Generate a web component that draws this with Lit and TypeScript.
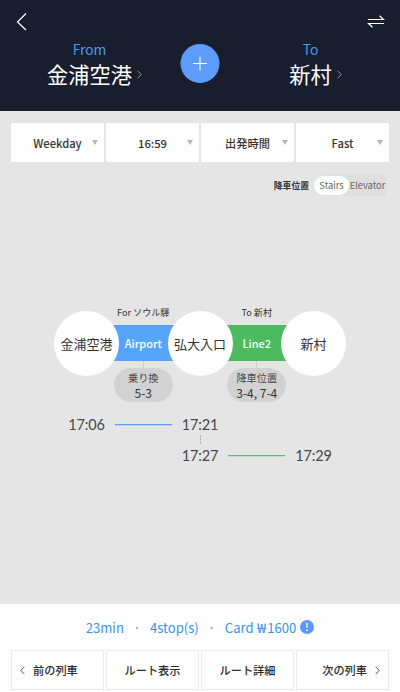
import { LitElement, html, css, svg } from "lit";
import { customElement, property } from "lit/decorators.js";

@customElement("chevron-icon")
class ChevronIcon extends LitElement {
  @property() dir = "right";
  static styles = css`
    :host { display: block; line-height: 0; }
    svg { display: block; width: 5px; height: 9px; fill: none; stroke: currentColor; stroke-width: 1; }
  `;
  render() {
    return html`<svg viewBox="0 0 5 9">${this.dir === "left"
      ? svg`<path d="M4.3.8.8 4.5l3.5 3.7"/>`
      : svg`<path d="M.7.8l3.5 3.7L.7 8.2"/>`}</svg>`;
  }
}

@customElement("route-header")
class RouteHeader extends LitElement {
  static styles = css`
    :host { display: block; height: 111px; background: #191e2e; color: #fff; box-sizing: border-box; }
    svg { display: block; fill: none; stroke: #fff; }
    .nav { height: 40px; padding: 12px 15px 0 16px; box-sizing: border-box; display: flex; justify-content: space-between; }
    .back { width: 12px; height: 20px; }
    .swap { width: 18px; height: 14px; margin-top: 3px; }
    .places { display: grid; grid-template-columns: 180px 40px 180px; height: 60px; }
    .place { display: flex; flex-direction: column; align-items: center; }
    .from { padding-right: 1px; }
    .to { padding-left: 1px; }
    .label { color: #4c9be8; font-size: 13.8px; line-height: 18px; }
    .name { display: flex; align-items: center; gap: 5px; font-size: 21.2px; line-height: 32px; margin-left: 10px; }
    .name chevron-icon { color: #9296a0; }
    .add svg { display: block; width: 40px; height: 40px; margin-top: 3px; }
    .disc { fill: #5e9cfb; stroke: none; }
  `;
  render() {
    return html`
      <div class="nav">
        <svg class="back" viewBox="0 0 12 20"><path d="M10 1.5 1.5 10l8.5 8" stroke-width="1.2"/></svg>
        <svg class="swap" viewBox="0 0 18 14" stroke-width="1.2"><path d="M1 4.5h15.5L12.5.8M17 8.5H1.5l4 3.7"/></svg>
      </div>
      <div class="places">
        <div class="place from"><div class="label">From</div><div class="name">金浦空港<chevron-icon></chevron-icon></div></div>
        <div class="add"><svg viewBox="0 0 40 40"><circle class="disc" cx="20" cy="20.5" r="19.5"/><path d="M13 20.5h14M20 13.5v14" stroke-width="1.1"/></svg></div>
        <div class="place to"><div class="label">To</div><div class="name">新村<chevron-icon></chevron-icon></div></div>
      </div>`;
  }
}

@customElement("route-filters")
class RouteFilters extends LitElement {
  static styles = css`
    :host { display: block; padding: 12px 11px 0; }
    .selects { display: grid; grid-template-columns: repeat(4, 1fr); gap: 2px; }
    .select { height: 39px; background: #fefefe; display: grid; grid-template-columns: 13px 1fr 13px; align-items: center; text-align: center; font-weight: 500; font-size: 11.2px; color: #333; }
    .value { grid-column: 2; white-space: nowrap; }
    .arrow { border: 3.5px solid transparent; border-top: 5px solid #b5b5b5; border-bottom: 0; width: 0; margin-left: 1px; }
    .position { display: flex; justify-content: flex-end; align-items: center; gap: 5px; padding: 13px 3px 0 0; font-size: 8.8px; }
    .caption { font-weight: 700; color: #333; }
    .toggle { display: flex; width: 72px; height: 21px; border-radius: 11px 2px 2px 11px; background: #dfdfdf; color: #666; line-height: 20px; font-size: 9.3px; text-align: center; }
    .on { width: 35px; height: 19px; margin-top: 1px; line-height: 18px; border-radius: 10px; background: #fff; }
    .off { flex: 1; white-space: nowrap; }
  `;
  render() {
    return html`
      <div class="selects">${["Weekday", "16:59", "出発時間", "Fast"].map(
        (v) => html`<div class="select"><span class="value">${v}</span><i class="arrow"></i></div>`)}</div>
      <div class="position"><span class="caption">降車位置</span>
        <div class="toggle"><span class="on">Stairs</span><span class="off">Elevator</span></div>
      </div>`;
  }
}

@customElement("route-map")
class RouteMap extends LitElement {
  static styles = css`
    :host { display: block; padding: 109px 54px 0; color: #333; }
    .body { position: relative; z-index: 0; }
    .track { display: grid; grid-template-columns: 65px 48.5px 65px 48.5px 65px; height: 97px; }
    .station { width: 65px; height: 65px; margin-top: 6px; border-radius: 50%; background: #fefefe; display: flex; align-items: center; justify-content: center; font-size: 13px; white-space: nowrap; }
    .leg { display: flex; flex-direction: column; align-items: center; margin: 0 -8px; z-index: -1; }
    .toward { font-size: 9.1px; line-height: 14px; height: 20px; white-space: nowrap; }
    .bar { align-self: stretch; height: 36px; line-height: 37px; text-align: center; color: #fff; font-weight: 500; font-size: 11px; }
    .blue .bar { background: #57a5fb; }
    .green .bar { background: #4cba5f; }
    .stem { width: 1px; height: 7px; background: #ccc; }
    .exit { width: 59px; height: 34px; border-radius: 17px; background: #d2d2d2; text-align: center; font-size: 10.2px; color: #4c4c4c; flex: none; }
    .exit div { line-height: 19px; white-space: nowrap; }
    .exit .door { font-size: 12px; line-height: 12px; color: #333; }
    .times { display: grid; grid-template-columns: 65px 48.5px 65px 48.5px 65px; grid-template-rows: 20px 11px 20px; align-items: center; justify-items: center; font-family: Lato, sans-serif; font-size: 14.5px; letter-spacing: -.2px; color: #484848; margin-top: 12px; }
    .line { display: block; width: 57px; height: 2px; margin-top: 1px; }
    .blue.line { color: #5f9df2; grid-column: 2; }
    .green.line { color: #5cba74; grid-column: 4; }
    .t2, .t3, .dots { grid-column: 3; }
    .dots { width: 0; height: 9px; border-left: 1px dotted #999; grid-row: 2; }
    .t3, .t4, .green.line { grid-row: 3; }
    .t4 { grid-column: 5; }
  `;
  leg(color: string, toward: string, line: string, label: string, door: string) {
    return html`<div class="leg ${color}"><div class="toward">${toward}</div><div class="bar">${line}</div>
      <div class="stem"></div><div class="exit"><div>${label}</div><div class="door">${door}</div></div></div>`;
  }
  line(color: string) {
    return html`<svg class="line ${color}" viewBox="0 0 57 2"><path d="M0 .7h57" stroke="currentColor" stroke-width="1.3"/></svg>`;
  }
  render() {
    return html`<div class="body">
      <div class="track">
        <div class="station">金浦空港</div>
        ${this.leg("blue", "For ソウル驛", "Airport", "乗り換", "5-3")}
        <div class="station">弘大入口</div>
        ${this.leg("green", "To 新村", "Line2", "降車位置", "3-4, 7-4")}
        <div class="station">新村</div>
      </div>
      <div class="times">
        <span>17:06</span>${this.line("blue")}<span class="t2">17:21</span>
        <i class="dots"></i>
        <span class="t3">17:27</span>${this.line("green")}<span class="t4">17:29</span>
      </div></div>`;
  }
}

@customElement("route-footer")
class RouteFooter extends LitElement {
  static styles = css`
    :host { display: block; background: #fefefe; height: 88px; flex: none; }
    .summary { display: flex; align-items: center; justify-content: center; height: 46px; color: #3a94e4; font-size: 13.1px; white-space: nowrap; }
    .dot { width: 26px; text-align: center; color: #777; }
    .won { display: inline-block; transform: scaleX(1.25); margin: 0 2px 0 1.5px; }
    .info { width: 14px; height: 14px; border-radius: 50%; background: #5c98fa; margin-left: 4px; }
    .info svg { display: block; width: 14px; height: 14px; fill: #fff; }
    .actions { display: grid; grid-template-columns: repeat(4, 1fr); gap: 2px; padding: 0 11px; }
    .action { box-sizing: border-box; height: 40px; border: 1px solid #ebebeb; display: flex; align-items: center; justify-content: center; font-weight: 500; font-size: 11.2px; color: #2b2b2b; white-space: nowrap; }
    .prev { justify-content: flex-start; padding-left: 8px; gap: 8px; }
    .next { justify-content: flex-end; padding-right: 8px; gap: 8px; }
    chevron-icon { color: #555; }
  `;
  render() {
    return html`
      <div class="summary"><span>23min</span><span class="dot">·</span><span>4stop(s)</span><span class="dot">·</span><span>Card <span class="won">₩</span>1600</span>
        <span class="info"><svg viewBox="0 0 14 14"><path d="M6.2 3h1.6l-.3 5h-1z"/><circle cx="7" cy="10.3" r=".9"/></svg></span></div>
      <div class="actions">
        <div class="action prev"><chevron-icon dir="left"></chevron-icon>前の列車</div>
        <div class="action">ルート表示</div>
        <div class="action">ルート詳細</div>
        <div class="action next">次の列車<chevron-icon></chevron-icon></div>
      </div>`;
  }
}

@customElement("app-root")
class AppRoot extends LitElement {
  static styles = css`
    :host { display: flex; flex-direction: column; width: 400px; height: 692px; overflow: hidden; background: #e5e5e5; font-family: "Noto Sans CJK JP", sans-serif; }
    route-map { flex: 1; }
  `;
  render() {
    return html`<route-header></route-header><route-filters></route-filters><route-map></route-map><route-footer></route-footer>`;
  }
}
